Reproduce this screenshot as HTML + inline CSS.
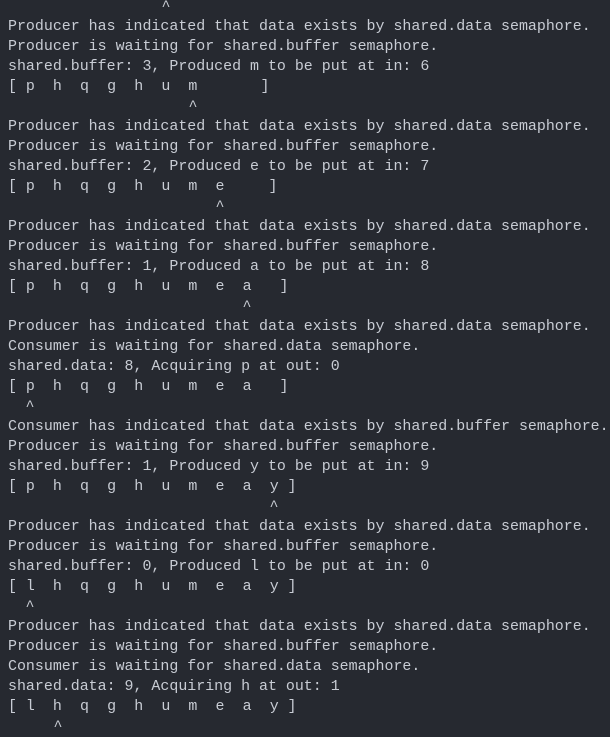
<!DOCTYPE html>
<html><head><style>
html,body{margin:0;padding:0;background:#262930;width:610px;height:726px;overflow:hidden}
.l{position:absolute;left:8px;height:20px;line-height:20px;font-family:"Liberation Mono",monospace;font-size:14.95px;color:#c8ccd4;white-space:pre}
.c{position:absolute;height:20px;line-height:20px;font-family:"Liberation Mono",monospace;font-size:14.95px;color:#c8ccd4;width:10px;text-align:center;margin-left:-5px}
</style></head><body>
<div id="r"></div>
<script>
var L=[];
function T(n,s){L.push('<div class="l" style="top:'+(-3+20*n)+'px">'+s+'</div>');}
function C(n,x,ch){L.push('<div class="c" style="top:'+(-3+20*n)+'px;left:'+x+'px">'+ch+'</div>');}
function A(n,letters,br){C(n,12.5,'[');for(var i=0;i<letters.length;i++)C(n,30.3+27.1*i,letters[i]);C(n,br,']');}
var P1="Producer has indicated that data exists by shared.data semaphore.";
var P2="Producer is waiting for shared.buffer semaphore.";
C(0,166,'^');
var blocks=[
[[P1,P2,"shared.buffer: 3, Produced m to be put at in: 6"],"phqghum",265,193],
[[P1,P2,"shared.buffer: 2, Produced e to be put at in: 7"],"phqghume",273,220],
[[P1,P2,"shared.buffer: 1, Produced a to be put at in: 8"],"phqghumea",284,247],
[[P1,"Consumer is waiting for shared.data semaphore.","shared.data: 8, Acquiring p at out: 0"],"phqghumea",284,30],
[["Consumer has indicated that data exists by shared.buffer semaphore.",P2,"shared.buffer: 1, Produced y to be put at in: 9"],"phqghumeay",292,274],
[[P1,P2,"shared.buffer: 0, Produced l to be put at in: 0"],"lhqghumeay",292,30],
[[P1,P2,"Consumer is waiting for shared.data semaphore.","shared.data: 9, Acquiring h at out: 1"],"lhqghumeay",292,58]
];
var n=1;
blocks.forEach(function(b){b[0].forEach(function(s){T(n++,s);});A(n++,b[1],b[2]);C(n++,b[3],'^');});
document.getElementById('r').innerHTML=L.join('');
</script>
</body></html>
